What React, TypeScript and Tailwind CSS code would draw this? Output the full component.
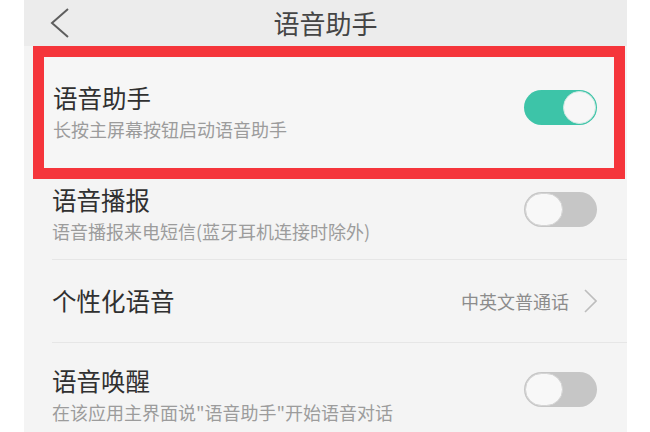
import React from "react";

function Toggle({ on }: { on: boolean }) {
  if (on) {
    return (
      <div className="w-[73px] h-[35px] rounded-full bg-[#3dc4a8] flex items-center justify-end pr-[1px] shrink-0 mb-[10px]">
        <div className="w-[33px] h-[33px] rounded-full bg-[#f7f7f7] border border-[#cfe9e2]" />
      </div>
    );
  }
  return (
    <div className="w-[73px] h-[35px] rounded-full bg-[#c6c6c6] flex items-center justify-start pl-[1px] shrink-0 mb-[10px]">
      <div className="w-[38px] h-[33px] rounded-full bg-[#f8f8f8] border border-[#d4d4d4]" />
    </div>
  );
}

function Texts({ title, sub }: { title: string; sub: string }) {
  return (
    <div className="flex flex-col">
      <div className="text-[24.5px] leading-[28px] text-[#303030]">{title}</div>
      <div className="mt-[6px] text-[18px] leading-[22px] text-[#9c9c9c]">{sub}</div>
    </div>
  );
}

export default function App() {
  return (
    <div className="w-[650px] h-[432px] bg-white overflow-hidden font-['Noto_Sans_CJK_SC','Noto_Sans',sans-serif]">
      <div className="ml-[24px] w-[603px] h-full bg-[#f4f4f4] flex flex-col">
        <div className="h-[46px] bg-[#ececec] grid grid-cols-[1fr_auto_1fr] items-center">
          <div className="pl-[26px] flex items-center">
            <svg width="20" height="32" viewBox="0 0 20 32" fill="none">
              <polyline points="18,2 2,16 18,30" stroke="#5e5e5e" strokeWidth="2" strokeLinejoin="miter" />
            </svg>
          </div>
          <div className="text-[26px] leading-[30px] text-[#454545]">语音助手</div>
          <div />
        </div>

        <div className="ml-[9px] mr-[2px] h-[133px] border-[11px] border-[#f5353b] bg-[#f6f6f6] flex items-center justify-between pl-[9px] pr-[17px]">
          <Texts title="语音助手" sub="长按主屏幕按钮启动语音助手" />
          <Toggle on={true} />
        </div>

        <div className="h-[81px] flex items-center justify-between pl-[28px] pr-[30px] pb-[10px]">
          <Texts title="语音播报" sub="语音播报来电短信(蓝牙耳机连接时除外)" />
          <Toggle on={false} />
        </div>
        <div className="ml-[28px] h-px bg-[#e6e6e6]" />

        <div className="h-[82px] flex items-center justify-between pl-[28px] pr-[30px]">
          <div className="text-[24.5px] leading-[28px] text-[#303030]">个性化语音</div>
          <div className="flex items-center">
            <span className="text-[18px] leading-[24px] text-[#8c8c8c]">中英文普通话</span>
            <svg className="ml-[15px]" width="13" height="24" viewBox="0 0 13 24" fill="none">
              <polyline points="1,1 12,12 1,23" stroke="#bdbdbd" strokeWidth="1.6" />
            </svg>
          </div>
        </div>
        <div className="ml-[28px] h-px bg-[#e6e6e6]" />

        <div className="h-[89px] flex items-center justify-between pl-[28px] pr-[30px] pt-[14px]">
          <Texts title="语音唤醒" sub={'在该应用主界面说"语音助手"开始语音对话'} />
          <Toggle on={false} />
        </div>
      </div>
    </div>
  );
}
